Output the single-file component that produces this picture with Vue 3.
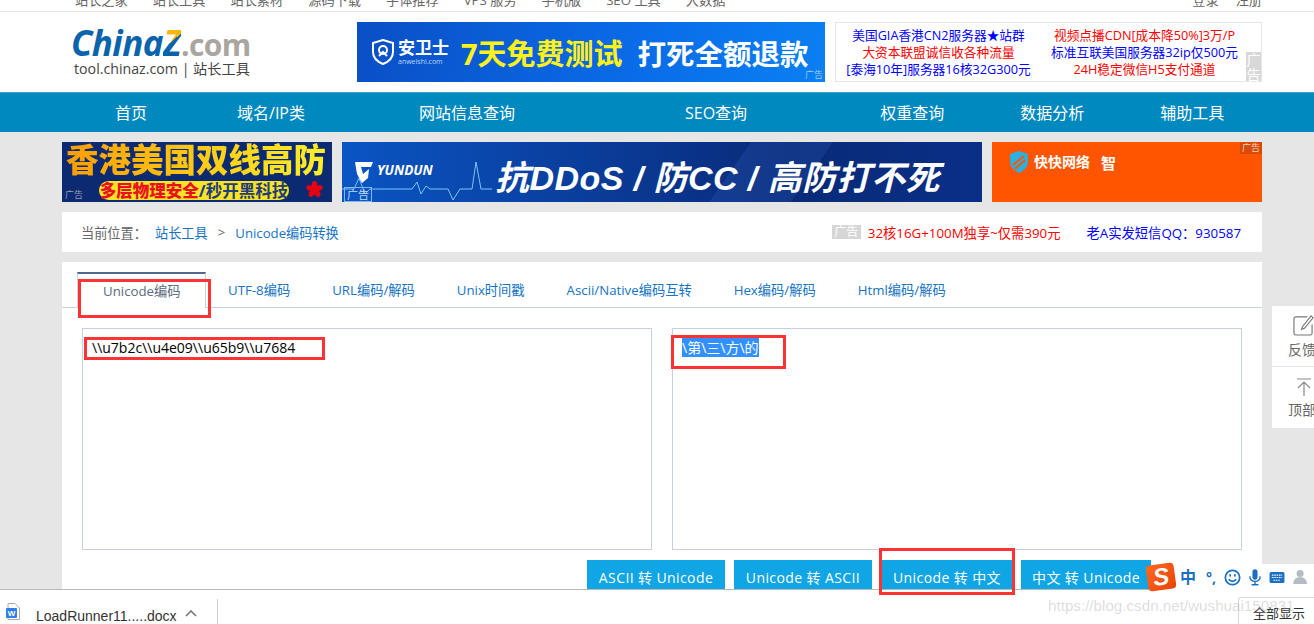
<script setup>
const topLinks = ['站长之家', '站长工具', '站长素材', '源码下载', '字体推荐', 'VPS 服务', '手机版', 'SEO 工具', '大数据']
const navItems = [
  { text: '首页', gap: 115 },
  { text: '域名/IP类', gap: 90 },
  { text: '网站信息查询', gap: 114 },
  { text: 'SEO查询', gap: 170 },
  { text: '权重查询', gap: 133 },
  { text: '数据分析', gap: 76 },
  { text: '辅助工具', gap: 76 },
]
const tabs = ['UTF-8编码', 'URL编码/解码', 'Unix时间戳', 'Ascii/Native编码互转', 'Hex编码/解码', 'Html编码/解码']
const adLines = [
  { text: '美国GIA香港CN2服务器★站群', color: 'blue' },
  { text: '视频点播CDN[成本降50%]3万/P', color: 'red' },
  { text: '大资本联盟诚信收各种流量', color: 'red' },
  { text: '标准互联美国服务器32ip仅500元', color: 'blue' },
  { text: '[泰海10年]服务器16核32G300元', color: 'blue' },
  { text: '24H稳定微信H5支付通道', color: 'red' },
]
const buttons = [
  { label: 'ASCII 转 Unicode', width: 138 },
  { label: 'Unicode 转 ASCII', width: 138 },
  { label: 'Unicode 转 中文', width: 130 },
  { label: '中文 转 Unicode', width: 130 },
]
</script>

<template>
  <div class="page">
    <div class="topbar">
      <a v-for="link in topLinks" :key="link">{{ link }}</a>
      <a class="top-right">登录</a>
      <a>注册</a>
    </div>

    <header class="header">
      <div class="logo">
        <div class="logo-mark"><span class="logo-china">China</span><span class="logo-z">Z</span><span class="logo-com">.com</span></div>
        <div class="logo-sub">tool.chinaz.com | 站长工具</div>
      </div>
      <div class="ad-anwei">
        <svg class="anwei-shield" width="22" height="26" viewBox="0 0 22 26">
          <path d="M11 1 L21 4 V13 C21 19 16 23 11 25 C6 23 1 19 1 13 V4 Z" fill="none" stroke="#fff" stroke-width="2" />
          <circle cx="11" cy="11" r="4" fill="none" stroke="#fff" stroke-width="2" />
          <path d="M7 17 L11 13 L15 17" fill="none" stroke="#fff" stroke-width="2" />
        </svg>
        <div class="anwei-name">安卫士<small>anweishi.com</small></div>
        <span class="anwei-yellow">7天免费测试</span>
        <span class="anwei-white">打死全额退款</span>
        <i class="ad-mark">广告</i>
      </div>
      <div class="ad-text">
        <a v-for="line in adLines" :key="line.text" :class="line.color">{{ line.text }}</a>
        <i class="ad-tag">广告</i>
      </div>
    </header>

    <nav class="nav">
      <a v-for="item in navItems" :key="item.text" :style="{ marginLeft: item.gap + 'px' }">{{ item.text }}</a>
    </nav>

    <main class="wrap">
      <div class="banners">
        <div class="ban-hk">
          <div class="hk-title">香港美国双线高防</div>
          <div class="hk-pill"><b>多层物理安全</b>/秒开黑科技</div>
          <svg class="hk-flower" width="17" height="17" viewBox="0 0 18 18">
            <g fill="#e60012">
              <ellipse cx="9" cy="4.5" rx="3" ry="4.5" />
              <ellipse cx="9" cy="4.5" rx="3" ry="4.5" transform="rotate(72 9 9)" />
              <ellipse cx="9" cy="4.5" rx="3" ry="4.5" transform="rotate(144 9 9)" />
              <ellipse cx="9" cy="4.5" rx="3" ry="4.5" transform="rotate(216 9 9)" />
              <ellipse cx="9" cy="4.5" rx="3" ry="4.5" transform="rotate(288 9 9)" />
            </g>
          </svg>
          <i class="ad-mark left">广告</i>
        </div>
        <div class="ban-yd">
          <svg class="yd-line" width="150" height="60" viewBox="0 0 150 60">
            <path d="M0 47 H12 L17 36 L23 52 L28 47 H70 L75 40 L79 52 L84 44 L88 47 H106 L111 58 L118 47 H130 L134 20 L139 47 H150" fill="none" stroke="#7cc4f5" stroke-width="1" />
          </svg>
          <svg class="yd-shield" width="20" height="24" viewBox="0 0 20 24">
            <path d="M1 2 H19 L17 7 H7 L9 14 L15 9 L14 18 L8 23 L3 14 Z" fill="#fff" />
          </svg>
          <span class="yd-name">YUNDUN</span>
          <span class="yd-title">抗DDoS / 防CC / 高防打不死</span>
          <i class="yd-mark">广告</i>
        </div>
        <div class="ban-kk">
          <svg width="18" height="22" viewBox="0 0 18 22">
            <path d="M9 0 L18 3 V11 C18 16 13 20 9 22 C5 20 0 16 0 11 V3 Z" fill="#2cb0e0" />
            <path d="M3 14 L14 5 M5 18 L15 9" stroke="#ff5500" stroke-width="2" />
          </svg>
          <b class="kk-name">快快网络</b>
          <b class="kk-char">智</b>
          <i class="kk-mark">广告</i>
        </div>
      </div>

      <div class="crumb">
        <span class="crumb-label">当前位置：</span>
        <a>站长工具</a>
        <span class="crumb-sep">&gt;</span>
        <a>Unicode编码转换</a>
        <div class="crumb-right">
          <i class="crumb-tag">广告</i>
          <a class="red">32核16G+100M独享~仅需390元</a>
          <a class="blue qq">老A实发短信QQ：930587</a>
        </div>
      </div>

      <section class="panel">
        <div class="tabs">
          <a class="tab active">Unicode编码</a>
          <a v-for="tab in tabs" :key="tab" class="tab">{{ tab }}</a>
        </div>
        <div class="fields">
          <div class="field"><span class="plain">\\u7b2c\\u4e09\\u65b9\\u7684</span></div>
          <div class="field"><span class="picked">\第\三\方\的</span></div>
        </div>
        <div class="actions">
          <button v-for="btn in buttons" :key="btn.label" type="button" :style="{ width: btn.width + 'px' }">{{ btn.label }}</button>
        </div>
      </section>
    </main>

    <aside class="float">
      <div class="float-item">
        <svg class="float-edit" width="21" height="21" viewBox="0 0 22 22" fill="none" stroke="#777" stroke-width="1.2">
          <path d="M15 2 H3 Q1 2 1 4 V19 Q1 21 3 21 H18 Q20 21 20 19 V10" />
          <path d="M19 1 L21 3 L12 14 L9 15 L10 12 Z" />
        </svg>
        <span>反馈</span>
      </div>
      <div class="float-item">
        <svg class="float-top" width="14" height="18" viewBox="0 0 14 18" fill="none" stroke="#888" stroke-width="1.2">
          <path d="M0 1 H14 M7 4 V18 M1 10 L7 4 L13 10" />
        </svg>
        <span>顶部</span>
      </div>
    </aside>

    <i class="mark mark-tab"></i>
    <i class="mark mark-left"></i>
    <i class="mark mark-right"></i>
    <i class="mark mark-btn"></i>

    <footer class="downloads">
      <svg class="doc" width="14" height="17" viewBox="0 0 14 17">
        <path d="M2 .5 H9 L13.5 5 V16.5 H2 Z" fill="#fff" stroke="#aaa" />
        <rect x="0" y="5" width="11" height="10" rx="1" fill="#2f7fe6" />
        <text x="5.5" y="13" font-size="8" fill="#fff" text-anchor="middle" font-family="Liberation Sans" font-weight="700">W</text>
      </svg>
      <span class="doc-name">LoadRunner11.....docx</span>
      <svg class="caret" width="12" height="7" viewBox="0 0 12 7" fill="none" stroke="#777" stroke-width="1.6">
        <path d="M1 6 L6 1 L11 6" />
      </svg>
      <span class="doc-sep"></span>
      <span class="show-all">全部显示</span>
    </footer>

    <div class="ime">
      <span class="ime-logo">S</span>
      <span class="ime-zh">中</span>
      <span class="ime-punct">°,</span>
      <svg width="17" height="17" viewBox="0 0 18 18" fill="none" stroke="#1c6fc4" stroke-width="1.8">
        <circle cx="9" cy="9" r="7.6" />
        <path d="M5 11 Q9 15 13 11" />
        <path d="M6.5 5.5 V8 M11.5 5.5 V8" />
      </svg>
      <svg width="12" height="17" viewBox="0 0 14 19" fill="#1c6fc4">
        <rect x="4" y="0" width="6" height="12" rx="3" />
        <path d="M1 8 Q1 14 7 14 Q13 14 13 8 M7 14 V18 M3 18 H11" fill="none" stroke="#1c6fc4" stroke-width="1.6" />
      </svg>
      <svg width="16" height="11" viewBox="0 0 19 14">
        <rect width="19" height="14" rx="2" fill="#1c6fc4" />
        <path d="M3 4 H16 M3 7 H16 M5 10.5 H14" stroke="#fff" stroke-width="1.5" stroke-dasharray="2 1" />
      </svg>
      <svg width="16" height="16" viewBox="0 0 18 18" fill="#b5bcc4">
        <circle cx="8" cy="5" r="4" />
        <path d="M0 17 Q1 9 8 9 Q15 9 16 17 Z" />
      </svg>
    </div>

    <div class="watermark">https://blog.csdn.net/wushuai150831</div>
  </div>
</template>

<style>
html,
body {
  margin: 0;
  overflow: hidden;
}
</style>

<style scoped>
.page {
  position: relative;
  width: 1314px;
  height: 624px;
  overflow: hidden;
  background: #e6e6e6;
  font-family: "Open Sans", "Noto Sans CJK SC", sans-serif;
  font-size: 13.2px;
  color: #555;
}
i {
  font-style: normal;
}
.blue {
  color: #00f;
}
.red {
  color: #f00;
}

.topbar {
  display: flex;
  gap: 25px;
  height: 11px;
  padding-left: 75px;
  overflow: hidden;
  background: #fff;
  border-bottom: 1px solid #e3e3e3;
  line-height: 0;
  color: #666;
}
.top-right {
  margin-left: auto;
  margin-right: -8px;
}
.topbar a:last-child {
  margin-right: 52px;
}

.header {
  display: flex;
  align-items: flex-start;
  height: 80px;
  background: #fff;
}
.logo {
  width: 286px;
  margin-left: 71px;
  padding-top: 15px;
}
.logo-mark {
  height: 32px;
  font-size: 35px;
  line-height: 32px;
  font-style: italic;
  font-weight: 700;
  letter-spacing: -0.6px;
  white-space: nowrap;
}
.logo-china {
  color: #0a64ab;
}
.logo-z {
  background: linear-gradient(140deg, #f7b80b 48%, #0a64ab 48%);
  -webkit-background-clip: text;
  background-clip: text;
  color: transparent;
}
.logo-com {
  color: #aaa69f;
  font-style: normal;
  font-size: 30px;
}
.logo-sub {
  margin: 0 0 0 3px;
  font-size: 14.2px;
  line-height: 20px;
  color: #444;
  white-space: nowrap;
}

.ad-anwei {
  position: relative;
  display: flex;
  align-items: center;
  flex: none;
  width: 468px;
  height: 60px;
  margin-top: 10px;
  background: linear-gradient(100deg, #0a4fc6, #0a6ce8 60%, #0a80f2);
  color: #fff;
  font-weight: 700;
  white-space: nowrap;
}
.anwei-shield {
  margin-left: 15px;
}
.anwei-name {
  display: flex;
  flex-direction: column;
  width: 63px;
  margin-left: 4px;
  font-size: 17px;
  line-height: 20px;
}
.anwei-name small {
  font-size: 7px;
  line-height: 8px;
  font-weight: 400;
  color: #b9d6fb;
}
.anwei-yellow {
  font-size: 29px;
  color: #fff21c;
}
.anwei-white {
  margin-left: 15px;
  font-size: 28.5px;
}
.ad-mark {
  position: absolute;
  right: 2px;
  bottom: 1px;
  font-size: 9px;
  line-height: 12px;
  font-weight: 400;
  color: #9cc8f7;
}
.ad-mark.left {
  right: auto;
  left: 3px;
  color: #9a9ab0;
}

.ad-text {
  position: relative;
  display: grid;
  grid-template-columns: 205px 207px;
  flex: none;
  width: 425px;
  height: 58px;
  margin: 10px 0 0 10px;
  border: 1px solid #e6e6e6;
  font-size: 12.7px;
  line-height: 17px;
  text-align: center;
  white-space: nowrap;
  align-content: center;
}
.ad-tag {
  position: absolute;
  right: 0;
  bottom: 0;
  width: 15px;
  height: 29px;
  background: #d8d8d8;
  color: #fff;
  font-size: 14px;
  line-height: 15px;
  text-align: center;
  white-space: normal;
}

.nav {
  display: flex;
  height: 39px;
  border-top: 1px solid #3aa3d1;
  background: #0089bf;
  color: #fff;
  font-size: 16px;
  line-height: 40px;
  white-space: nowrap;
}

.wrap {
  width: 1200px;
  margin-left: 62px;
  padding-top: 10px;
}
.banners {
  display: flex;
  gap: 10px;
  height: 60px;
}
.ban-hk,
.ban-yd,
.ban-kk {
  position: relative;
  overflow: hidden;
  height: 60px;
  white-space: nowrap;
}
.ban-hk {
  width: 270px;
  background: #0b2a72;
}
.hk-title {
  padding-left: 4px;
  height: 36px;
  font-size: 32.5px;
  line-height: 36px;
  font-weight: 900;
  background: linear-gradient(90deg, #ff9c00, #ffd21a 60%, #fff02a);
  -webkit-background-clip: text;
  background-clip: text;
  color: transparent;
}
.hk-pill {
  width: 190px;
  height: 19px;
  margin: 3px 0 0 37px;
  border-radius: 10px;
  background: #fbe326;
  color: #1f3d7a;
  font-size: 16.5px;
  line-height: 19px;
  font-weight: 700;
  text-align: center;
}
.hk-pill b {
  color: #e8121e;
}
.hk-flower {
  position: absolute;
  left: 244px;
  top: 39px;
}
.ban-yd {
  display: flex;
  align-items: center;
  width: 640px;
  background:
    linear-gradient(125deg, transparent 60%, rgba(70, 120, 220, 0.16) 60%, rgba(70, 120, 220, 0.16) 72%, transparent 72%),
    linear-gradient(90deg, #0a55c4, #0a3f9e 35%, #092a78 70%, #0a2f86);
  color: #fff;
}
.yd-line {
  position: absolute;
  left: 0;
  top: 0;
}
.yd-shield {
  position: relative;
  margin: 0 0 0 12px;
  flex: none;
}
.yd-name {
  position: relative;
  width: 118px;
  margin: -4px 0 0 3px;
  flex: none;
  font-size: 13.5px;
  font-weight: 700;
  font-style: italic;
}
.yd-title {
  position: relative;
  padding-top: 6px;
  font-family: "Liberation Sans", "Noto Sans CJK SC", sans-serif;
  font-size: 34px;
  font-weight: 700;
  font-style: italic;
  letter-spacing: 0.45px;
}
.yd-mark {
  position: absolute;
  left: 2px;
  bottom: 0;
  padding: 0 2px;
  border: 1px solid #7fb8ea;
  font-size: 11px;
  line-height: 13px;
  color: #bcdcf7;
}
.ban-kk {
  display: flex;
  align-items: flex-start;
  width: 270px;
  padding-top: 9px;
  padding-left: 18px;
  box-sizing: border-box;
  background: #ff5500;
  color: #fff;
}
.kk-name {
  margin-left: 6px;
  font-size: 14px;
  line-height: 22px;
}
.kk-char {
  margin-left: 11px;
  font-size: 15px;
  line-height: 24px;
}
.kk-mark {
  position: absolute;
  right: 0;
  top: 0;
  padding: 0 2px;
  background: #d94a05;
  font-size: 9px;
  line-height: 12px;
  color: #f3d6c6;
}

.crumb {
  display: flex;
  align-items: center;
  height: 40px;
  margin-top: 10px;
  padding: 0 21px 0 19px;
  background: #fff;
  white-space: nowrap;
}
.crumb a {
  color: #1673c4;
}
.crumb-label {
  width: 74px;
  color: #666;
}
.crumb-sep {
  margin: 0 10px;
  color: #666;
}
.crumb-right {
  display: flex;
  align-items: center;
  margin-left: auto;
  font-size: 13.3px;
}
.crumb-right .red {
  color: #f00;
}
.crumb-right .blue {
  color: #00f;
}
.crumb-tag {
  width: 29px;
  height: 14px;
  margin-right: 7px;
  background: #d6d6d6;
  color: #fff;
  font-size: 12px;
  line-height: 14px;
  text-align: center;
}
.qq {
  margin-left: 26px;
}

.panel {
  height: 328px;
  margin-top: 10px;
  background: #fff;
}
.tabs {
  display: flex;
  height: 35px;
  padding: 10px 0 0 15px;
  border-bottom: 1px solid #c5d0e0;
  font-size: 13.25px;
  white-space: nowrap;
}
.tab {
  padding: 0 21px;
  color: #1673c4;
  line-height: 37px;
}
.tab.active {
  position: relative;
  box-sizing: border-box;
  width: 129px;
  height: 36px;
  padding: 0 0 0 25px;
  margin-right: 1px;
  border: 1px solid #c5d0e0;
  border-top: 2px solid #54688a;
  border-bottom: 0;
  background: #fff;
  color: #5a6a80;
  line-height: 35px;
}
.fields {
  display: flex;
  gap: 20px;
  padding: 20px 0 0 20px;
}
.field {
  box-sizing: border-box;
  width: 570px;
  height: 222px;
  padding: 9px;
  border: 1px solid #c5d0e0;
  font-size: 14px;
  line-height: 20px;
  color: #000;
}
.picked {
  background: #3390ff;
  color: #fff;
}
.actions {
  display: flex;
  gap: 9px;
  padding: 10px 0 0 525px;
}
.actions button {
  flex: none;
  height: 30px;
  padding: 3px 0 0;
  border: 0;
  background: #10a5e4;
  color: #fff;
  font: inherit;
  font-size: 14px;
  letter-spacing: 0.4px;
  white-space: nowrap;
}
.actions button:nth-child(3) {
  margin-left: 1px;
}

.float {
  position: absolute;
  left: 1272px;
  top: 306px;
  width: 42px;
  background: #fff;
  overflow: hidden;
}
.float-item {
  display: flex;
  flex-direction: column;
  align-items: flex-start;
  height: 61px;
  padding: 9px 0 0 16px;
  box-sizing: border-box;
  border-bottom: 1px solid #e6e6e6;
  font-size: 14px;
  color: #666;
  white-space: nowrap;
}
.float-item:last-child {
  border-bottom: 0;
}
.float-edit {
  margin-left: 5px;
}
.float-top {
  margin: 2px 0 0 9px;
}
.float-item span {
  margin: 3px 0 0 0;
}

.mark {
  position: absolute;
  box-sizing: border-box;
  border: 3px solid #f33;
}
.mark-tab {
  left: 78px;
  top: 279px;
  width: 133px;
  height: 39px;
}
.mark-left {
  left: 84px;
  top: 337px;
  width: 241px;
  height: 23px;
}
.mark-right {
  left: 671px;
  top: 335px;
  width: 115px;
  height: 34px;
}
.mark-btn {
  z-index: 3;
  left: 879px;
  top: 548px;
  width: 136px;
  height: 47px;
}

.downloads {
  position: absolute;
  z-index: 2;
  left: 0;
  right: 0;
  top: 589px;
  display: flex;
  align-items: center;
  height: 34px;
  border-top: 1px solid #b8b8b8;
  background: #fff;
  color: #333;
  font-size: 14px;
}
.doc {
  margin: 8px 0 0 6px;
}
.doc-name {
  margin: 18px 0 0 16px;
  font-family: "Liberation Sans", sans-serif;
}
.caret {
  margin: 12px 0 0 8px;
}
.doc-sep {
  width: 1px;
  height: 28px;
  margin: 12px 0 0 20px;
  background: #ccc;
}
.show-all {
  position: absolute;
  right: 0;
  top: 7px;
  width: 76px;
  height: 28px;
  box-sizing: border-box;
  padding-left: 14px;
  border: 1px solid #d8d8d8;
  border-right: 0;
  border-bottom: 0;
  border-top-left-radius: 3px;
  font-family: "Noto Sans CJK SC", sans-serif;
  font-size: 13px;
  line-height: 30px;
}

.ime {
  position: absolute;
  z-index: 4;
  left: 1147px;
  top: 564px;
  display: flex;
  align-items: center;
  gap: 8px;
  width: 167px;
  height: 26px;
  box-sizing: border-box;
  background: linear-gradient(90deg, transparent 16px, #fff 16px);
}
.ime-logo {
  flex: none;
  width: 28px;
  height: 26px;
  margin-right: -3px;
  border-radius: 4px;
  background: linear-gradient(135deg, #ff6a1e, #e8420a);
  color: #fff;
  font-family: "Liberation Sans", sans-serif;
  font-size: 24px;
  line-height: 26px;
  font-weight: 700;
  font-style: italic;
  text-align: center;
  transform: rotate(-8deg);
}
.ime-zh {
  color: #1c6fc4;
  font-size: 16px;
  line-height: 20px;
  font-weight: 700;
}
.ime-punct {
  width: 10px;
  margin-left: 2px;
  color: #1c6fc4;
  font-size: 14px;
  font-weight: 700;
}

.watermark {
  position: absolute;
  z-index: 5;
  left: 1048px;
  top: 597px;
  font-family: "Liberation Sans", sans-serif;
  font-size: 15.2px;
  line-height: 18px;
  color: rgba(140, 140, 140, 0.3);
  white-space: nowrap;
}
</style>
